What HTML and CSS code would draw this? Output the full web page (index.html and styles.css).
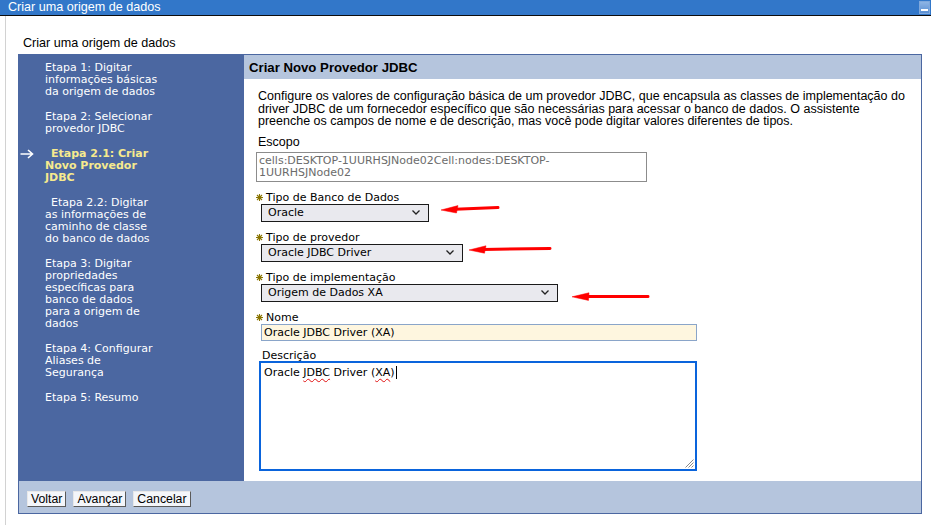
FILE: index.html
```html
<!DOCTYPE html>
<html lang="pt">
<head>
<meta charset="utf-8">
<title>Criar uma origem de dados</title>
<link rel="stylesheet" href="styles.css">
</head>
<body>
<div class="titlebar">
  <span class="titlebar-text">Criar uma origem de dados</span>
  <span class="minbtn"><span class="minbtn-bar"></span></span>
</div>
<div class="page">
  <div class="page-title">Criar uma origem de dados</div>
  <div class="wizard">
    <div class="wizard-main">
      <nav class="steps">
        <div class="step"><span class="step-mark"></span><span class="step-text">Etapa 1: Digitar<br>informações básicas<br>da origem de dados</span></div>
        <div class="step"><span class="step-mark"></span><span class="step-text">Etapa 2: Selecionar<br>provedor JDBC</span></div>
        <div class="step current"><span class="step-mark"><svg class="arrow" viewBox="0 0 14 10" width="14" height="10"><path d="M0.5 5H12.5M8 1L12.5 5L8 9" fill="none" stroke="#fff" stroke-width="1.6"/></svg></span><span class="step-text indent">Etapa 2.1: Criar<br>Novo Provedor<br>JDBC</span></div>
        <div class="step"><span class="step-mark"></span><span class="step-text indent">Etapa 2.2: Digitar<br>as informações de<br>caminho de classe<br>do banco de dados</span></div>
        <div class="step"><span class="step-mark"></span><span class="step-text">Etapa 3: Digitar<br>propriedades<br>específicas para<br>banco de dados<br>para a origem de<br>dados</span></div>
        <div class="step"><span class="step-mark"></span><span class="step-text">Etapa 4: Configurar<br>Aliases de<br>Segurança</span></div>
        <div class="step"><span class="step-mark"></span><span class="step-text">Etapa 5: Resumo</span></div>
      </nav>
      <section class="content">
        <h2 class="content-head">Criar Novo Provedor JDBC</h2>
        <div class="content-body">
          <p class="intro">Configure os valores de configuração básica de um provedor JDBC, que encapsula as classes de implementação do<br>driver JDBC de um fornecedor específico que são necessárias para acessar o banco de dados. O assistente<br>preenche os campos de nome e de descrição, mas você pode digitar valores diferentes de tipos.</p>
          <div class="label-plain">Escopo</div>
          <div class="scope">cells:DESKTOP-1UURHSJNode02Cell:nodes:DESKTOP-<br>1UURHSJNode02</div>

          <div class="label req"><svg class="star" viewBox="0 0 7 7" width="7" height="7"><path d="M3.5 0V7M0 3.5H7M1 1L6 6M6 1L1 6" stroke="#8a7400" stroke-width="1.1"/></svg>Tipo de Banco de Dados</div>
          <div class="select w1"><span>Oracle</span><svg class="chev" viewBox="0 0 8 5" width="8" height="5"><path d="M0.5 0.5L4 4L7.5 0.5" fill="none" stroke="#222" stroke-width="1.3"/></svg></div>

          <div class="label req"><svg class="star" viewBox="0 0 7 7" width="7" height="7"><path d="M3.5 0V7M0 3.5H7M1 1L6 6M6 1L1 6" stroke="#8a7400" stroke-width="1.1"/></svg>Tipo de provedor</div>
          <div class="select w2"><span>Oracle JDBC Driver</span><svg class="chev" viewBox="0 0 8 5" width="8" height="5"><path d="M0.5 0.5L4 4L7.5 0.5" fill="none" stroke="#222" stroke-width="1.3"/></svg></div>

          <div class="label req"><svg class="star" viewBox="0 0 7 7" width="7" height="7"><path d="M3.5 0V7M0 3.5H7M1 1L6 6M6 1L1 6" stroke="#8a7400" stroke-width="1.1"/></svg>Tipo de implementação</div>
          <div class="select w3"><span>Origem de Dados XA</span><svg class="chev" viewBox="0 0 8 5" width="8" height="5"><path d="M0.5 0.5L4 4L7.5 0.5" fill="none" stroke="#222" stroke-width="1.3"/></svg></div>

          <div class="label req"><svg class="star" viewBox="0 0 7 7" width="7" height="7"><path d="M3.5 0V7M0 3.5H7M1 1L6 6M6 1L1 6" stroke="#8a7400" stroke-width="1.1"/></svg>Nome</div>
          <div class="textinput">Oracle JDBC Driver (XA)</div>

          <div class="label desc">Descrição</div>
          <div class="textarea">Oracle <span class="spell">JDBC</span> Driver (<span class="spell">XA</span>)<span class="caret"></span>
            <svg class="grip" viewBox="0 0 10 10" width="10" height="10"><path d="M9.5 1.5L1.5 9.5M9.5 4.5L4.5 9.5M9.5 7.5L7.5 9.5" stroke="#8a8a8a" stroke-width="1"/></svg>
          </div>
        </div>
      </section>
    </div>
    <div class="wizard-foot">
      <button class="btn" type="button">Voltar</button>
      <button class="btn" type="button">Avançar</button>
      <button class="btn" type="button">Cancelar</button>
    </div>
  </div>
</div>
<svg class="annot" viewBox="0 0 931 525" width="931" height="525">
  <g fill="#f00" stroke="#f00">
    <polygon points="441,210 458,205.6 456.5,213" stroke-width="0.5"/>
    <line x1="455" y1="209.3" x2="498" y2="207.6" stroke-width="3" stroke-linecap="round"/>
    <polygon points="469,250 486,245.8 484.5,253.2" stroke-width="0.5"/>
    <line x1="483" y1="249.4" x2="550" y2="248.4" stroke-width="3" stroke-linecap="round"/>
    <polygon points="572,296.8 589,292.8 588.5,300.4" stroke-width="0.5"/>
    <line x1="586" y1="296.6" x2="648" y2="296.4" stroke-width="3" stroke-linecap="round"/>
  </g>
</svg>
</body>
</html>
```

FILE: styles.css
```css
* { box-sizing: border-box; }
html, body { margin: 0; padding: 0; background: #fff; }
body {
  width: 931px;
  height: 525px;
  overflow: hidden;
  position: relative;
  font-family: "Liberation Sans", Arial, sans-serif;
  font-size: 12px;
  color: #000;
}

.titlebar {
  height: 16px;
  background: #3277c9;
  border-bottom: 1px solid #0d0d0d;
  display: flex;
  justify-content: space-between;
  align-items: flex-start;
  padding-left: 8px;
}
.titlebar-text {
  color: #fff;
  font-size: 12.6px;
  line-height: 14px;
}
.minbtn {
  width: 11px;
  height: 13px;
  margin-top: 1px;
  margin-right: 1px;
  background: linear-gradient(#8db4e4, #5a8fd3);
  border: 1px solid #7fa8dc;
  display: flex;
  align-items: flex-end;
  justify-content: center;
  padding-bottom: 2px;
}
.minbtn-bar { width: 7px; height: 2px; background: #fff; }

.page {
  margin-left: 5px;
  border-left: 1px solid #d2d2d2;
  padding-left: 12px;
  padding-top: 20px;
  height: 509px;
}
.page-title {
  font-size: 12.6px;
  line-height: 14px;
  padding-left: 5px;
  margin-bottom: 4px;
}

.wizard {
  width: 904px;
  border: 1px solid #4b67a1;
}
.wizard-main {
  display: flex;
  height: 426px;
}
.steps {
  width: 225px;
  background: #4b67a1;
  padding-top: 7px;
  font-family: "DejaVu Sans", Verdana, sans-serif;
  font-size: 11px;
  line-height: 12px;
  color: #fff;
}
.step {
  display: flex;
  margin-bottom: 13px;
  white-space: nowrap;
}
.step-mark {
  width: 26px;
  padding-left: 1px;
  display: flex;
  align-items: flex-start;
  padding-top: 1px;
}
.step-text.indent { text-indent: 6px; }
.step.current .step-text { color: #f6ea8e; font-weight: bold; }

.content { width: 677px; }
.content-head {
  margin: 0;
  height: 24px;
  background: #b5c5dd;
  font-size: 13.2px;
  font-weight: bold;
  line-height: 25px;
  padding-left: 5px;
}
.content-body {
  padding-left: 14px;
  padding-right: 8px;
}
.intro {
  margin: 11px 0 0;
  line-height: 12.5px;
  font-size: 12.5px;
  white-space: nowrap;
}
.label-plain {
  margin-top: 8px;
  line-height: 13px;
  font-size: 12.5px;
}
.scope {
  margin: 3px 0 0 -2px;
  width: 391px;
  height: 30px;
  border: 1px solid #8c8c8c;
  padding: 2px 0 0 2px;
  font-family: "DejaVu Sans", Verdana, sans-serif;
  font-size: 11px;
  line-height: 12px;
  color: #6b6b6b;
}

.label {
  font-family: "DejaVu Sans", Verdana, sans-serif;
  font-size: 11px;
  line-height: 12px;
  margin-left: -2px;
  display: flex;
  align-items: center;
}
.label.req { margin-top: 8px; height: 14px; padding-top: 3px; }
.label .star { margin-right: 3px; margin-top: -2px; }
.label.desc { margin-top: 9px; margin-left: 4px; line-height: 10px; height: 11px; padding-top: 2px; }

.select {
  margin-left: 3px;
  height: 18px;
  background: #e9e9ee;
  border: 1px solid #1a1a1a;
  display: flex;
  align-items: center;
  justify-content: space-between;
  padding: 0 8px 0 6px;
  font-family: "DejaVu Sans", Verdana, sans-serif;
  font-size: 11px;
}
.select.w1 { width: 168px; }
.select.w2 { width: 202px; }
.select.w3 { width: 297px; }

.textinput {
  margin-left: 3px;
  width: 436px;
  height: 17px;
  background: #fef6df;
  border: 1px solid #8aa5c9;
  padding-left: 2px;
  font-family: "DejaVu Sans", Verdana, sans-serif;
  font-size: 11px;
  line-height: 15px;
}

.textarea {
  position: relative;
  margin-left: 1px;
  width: 438px;
  height: 110px;
  border: 2px solid #0a64dc;
  padding: 3px 0 0 3px;
  font-family: "DejaVu Sans", Verdana, sans-serif;
  font-size: 11px;
  line-height: 14px;
}
.spell {
  text-decoration: underline wavy #e01010;
  text-decoration-thickness: 1px;
  text-underline-offset: 2px;
  text-decoration-skip-ink: none;
}
.caret {
  display: inline-block;
  width: 1px;
  height: 13px;
  background: #000;
  vertical-align: -3px;
  margin-left: 1px;
}
.grip { position: absolute; right: 1px; bottom: 1px; }

.wizard-foot {
  height: 32px;
  background: #b5c5dd;
  display: flex;
  align-items: flex-start;
  gap: 7px;
  padding: 10px 0 0 8px;
}
.btn {
  height: 16px;
  margin: 0;
  padding: 0 3px;
  background: #f4f6fa;
  border: 1px solid;
  border-color: #e8e8e8 #5a5a5a #5a5a5a #e8e8e8;
  font-family: "Liberation Sans", Arial, sans-serif;
  font-size: 12.3px;
  line-height: 13px;
  color: #000;
}

.annot {
  position: absolute;
  left: 0;
  top: 0;
  pointer-events: none;
}
```
